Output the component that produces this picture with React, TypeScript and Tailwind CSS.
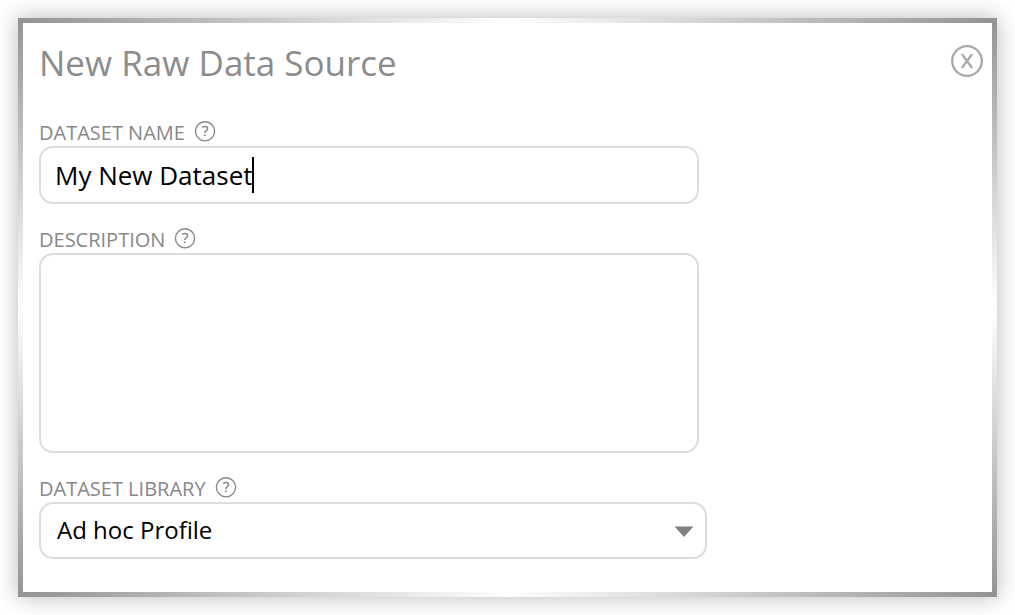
import { useState } from "react";
import type { ReactNode } from "react";

interface FieldProps {
  id: string;
  label: string;
  children: ReactNode;
}

const controlClass =
  "block w-full rounded-[14px] border-2 border-[#dddddd] bg-white leading-9 text-black outline-none";

export default function App() {
  const [name, setName] = useState("My New Dataset");
  const [description, setDescription] = useState("");
  const [library, setLibrary] = useState("adhoc");

  return (
    <main className="bg-white p-[18px] font-['Open_Sans','Noto_Sans',sans-serif]">
      <div className="bg-[linear-gradient(#939393,#ffffff,#939393),linear-gradient(#939393,#ffffff,#939393),linear-gradient(90deg,#939393,#ffffff,#939393)] bg-[length:5px_100%,5px_100%,100%_100%] bg-[position:left,right,center] bg-no-repeat p-[5px] shadow-[0_0_22px_rgba(0,0,0,0.28)]">
        <form className="bg-white pt-4 pr-2 pb-[33px] pl-4" onSubmit={(e) => e.preventDefault()}>
          <header className="flex items-start justify-between">
            <h1 className="text-[35px] leading-[48px] text-[#8c8c8c]">New Raw Data Source</h1>
            <button type="button" aria-label="Close" className="pt-[5px] text-[#a8a8a8]">
              <CloseIcon />
            </button>
          </header>

          <div className="mt-[31px] flex flex-col gap-[21px]">
            <Field id="dataset-name" label="DATASET NAME">
              <div className="relative max-w-[660px]">
                <input
                  id="dataset-name"
                  type="text"
                  value={name}
                  onChange={(e) => setName(e.target.value)}
                  className={`${controlClass} h-[58px] px-[14px] text-[26px] caret-transparent`}
                />
                <span className="absolute top-[11px] left-[213px] h-9 w-0.5 bg-black" />
              </div>
            </Field>

            <Field id="description" label="DESCRIPTION">
              <textarea
                id="description"
                value={description}
                onChange={(e) => setDescription(e.target.value)}
                className={`${controlClass} h-[200px] max-w-[660px] resize-none px-[14px] py-2 text-[26px]`}
              />
            </Field>

            <Field id="dataset-library" label="DATASET LIBRARY">
              <div className="relative max-w-[668px]">
                <select
                  id="dataset-library"
                  value={library}
                  onChange={(e) => setLibrary(e.target.value)}
                  className={`${controlClass} h-[57px] appearance-none pr-12 pb-0.5 pl-4 text-2xl leading-9`}
                >
                  <option value="adhoc">Ad hoc Profile</option>
                </select>
                <svg
                  className="pointer-events-none absolute top-6 right-[13px] h-3 w-5"
                  viewBox="0 0 20 12"
                  fill="#808080"
                  aria-hidden="true"
                >
                  <path d="M0.5 0.5h19L10 11z" />
                </svg>
              </div>
            </Field>
          </div>
        </form>
      </div>
    </main>
  );
}

function Field({ id, label, children }: FieldProps) {
  return (
    <div>
      <div className="flex h-7 items-end gap-[9px] text-[#888888]">
        <label htmlFor={id} className="text-xl leading-[26px]">
          {label}
        </label>
        <button type="button" aria-label={`Help: ${label}`} className="pb-1">
          <HelpIcon />
        </button>
      </div>
      {children}
    </div>
  );
}

function HelpIcon() {
  return (
    <svg className="h-[22px] w-[22px]" viewBox="0 0 22 22" fill="none" stroke="currentColor" aria-hidden="true">
      <circle cx="11" cy="11.3" r="9.6" strokeWidth="1.4" />
      <path d="M8.2 7.3c.9-.6 1.9-.9 2.8-.9 1.6 0 2.6.8 2.6 2.1 0 1-.6 1.6-1.5 2.3-.9.7-1.3 1.2-1.3 2.1" strokeWidth="1.5" />
      <circle cx="10.8" cy="15.2" r="1" fill="currentColor" stroke="none" />
    </svg>
  );
}

function CloseIcon() {
  return (
    <svg className="h-[34px] w-[34px]" viewBox="0 0 34 34" fill="none" stroke="currentColor" aria-hidden="true">
      <circle cx="17" cy="17" r="14.8" strokeWidth="2.3" />
      <path d="M12.5 11L21.5 23M21.5 11L12.5 23" strokeWidth="2.3" />
      <path d="M11 10.5h3M20 10.5h3M11 23.5h3M20 23.5h3" strokeWidth="1" />
    </svg>
  );
}
